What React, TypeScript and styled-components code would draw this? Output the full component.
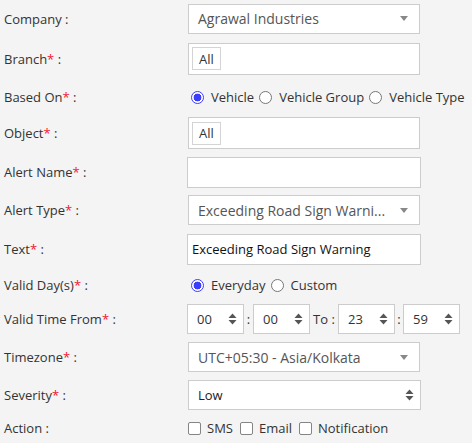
import styled, { createGlobalStyle } from 'styled-components'

const GlobalStyle = createGlobalStyle`
  html, body {
    margin: 0;
    padding: 0;
    background: #f4f4f4;
  }
  body {
    font-family: 'Open Sans', 'Liberation Sans', sans-serif;
    color: #333;
  }
`

const Form = styled.div`
  width: 472px;
  height: 443px;
  overflow: hidden;
  background: #f4f4f4;
  display: flex;
  flex-direction: column;
  padding-top: 1px;
  box-sizing: border-box;
`

const Row = styled.div<{ $h: number }>`
  flex: none;
  height: ${(p) => p.$h}px;
  display: grid;
  grid-template-columns: 187px 1fr;
  align-items: center;
`

const Label = styled.div`
  padding-left: 4px;
  font-size: 13px;
  color: #333;
  white-space: nowrap;

  .req {
    color: #f0162f;
  }
`

const Select = styled.div<{ $w?: number }>`
  box-sizing: border-box;
  width: ${(p) => p.$w ?? 232}px;
  margin-left: 1px;
  height: 30px;
  background: #fff;
  border: 1px solid #ccc;
  display: flex;
  align-items: center;
  justify-content: space-between;
  padding: 0 10px 0 9px;
  font-size: 14px;
  color: #555;
  white-space: nowrap;
`

const Caret = styled.span`
  width: 0;
  height: 0;
  border-left: 4px solid transparent;
  border-right: 4px solid transparent;
  border-top: 5px solid #888;
  margin-right: 1px;
`

const MultiBox = styled.div`
  box-sizing: border-box;
  width: 232px;
  margin-left: 1px;
  height: 32px;
  background: #fff;
  border: 1px solid #ccc;
  display: flex;
  align-items: center;
  padding-left: 3px;
`

const Chip = styled.span`
  box-sizing: border-box;
  height: 23px;
  padding: 0 6px;
  border: 1px solid #d4d4d4;
  display: flex;
  align-items: center;
  font-size: 13px;
  color: #333;
`

const TextInput = styled.div`
  box-sizing: border-box;
  width: 234px;
  height: 31px;
  background: #fff;
  border: 1px solid #ccc;
  display: flex;
  align-items: center;
  padding-left: 4px;
  font-size: 13px;
  color: #111;
`

const Choices = styled.div<{ $pad: number; $gap: number; $after: number }>`
  display: flex;
  align-items: center;
  font-size: 13px;
  color: #333;
  padding-left: ${(p) => p.$pad}px;
  white-space: nowrap;

  label {
    gap: ${(p) => p.$gap}px;
    margin-right: ${(p) => p.$after}px;
  }
`

const Choice = styled.label`
  display: flex;
  align-items: center;
`

const Radio = styled.span<{ $on?: boolean }>`
  box-sizing: border-box;
  width: 13px;
  height: 13px;
  border-radius: 50%;
  border: 1px solid ${(p) => (p.$on ? '#3d3dff' : '#767676')};
  background: ${(p) =>
    p.$on ? 'radial-gradient(circle, #3d3dff 0 3.6px, #fff 4.2px)' : '#fff'};
`

const Check = styled.span`
  box-sizing: border-box;
  width: 13px;
  height: 13px;
  border-radius: 2px;
  border: 1px solid #858585;
  background: #fff;
`

const TimeRow = styled.div`
  display: flex;
  align-items: center;
  font-size: 13px;
  color: #333;
`

const NumBox = styled.div`
  box-sizing: border-box;
  width: 57px;
  height: 30px;
  background: #fff;
  border: 1px solid #ccc;
  display: flex;
  align-items: center;
  justify-content: space-between;
  padding: 0 6px 0 9px;
  font-size: 13px;
  color: #333;
`

const Sep = styled.span<{ $w: number }>`
  width: ${(p) => p.$w}px;
  text-align: center;
`

const SeverityBox = styled(Select)`
  color: #222;
  font-size: 13px;
  padding-right: 6px;
`

function Spin() {
  return (
    <svg width="9" height="12" viewBox="0 0 9 12">
      <path d="M4.5 0.5 L8.5 5 H0.5 Z" fill="#555" />
      <path d="M4.5 11.5 L8.5 7 H0.5 Z" fill="#555" />
    </svg>
  )
}

function Req({ children }: { children: string }) {
  return (
    <Label>
      {children}
      <span className="req">*</span> :
    </Label>
  )
}

export default function App() {
  return (
    <>
      <GlobalStyle />
      <Form>
        <Row $h={35}>
          <Label>Company :</Label>
          <Select>
            Agrawal Industries
            <Caret />
          </Select>
        </Row>
        <Row $h={45}>
          <Req>Branch</Req>
          <MultiBox>
            <Chip>All</Chip>
          </MultiBox>
        </Row>
        <Row $h={32}>
          <Req>Based On</Req>
          <Choices $pad={4} $gap={7} $after={5}>
            <Choice>
              <Radio $on />
              Vehicle
            </Choice>
            <Choice>
              <Radio />
              Vehicle Group
            </Choice>
            <Choice>
              <Radio />
              Vehicle Type
            </Choice>
          </Choices>
        </Row>
        <Row $h={40}>
          <Req>Object</Req>
          <MultiBox>
            <Chip>All</Chip>
          </MultiBox>
        </Row>
        <Row $h={38}>
          <Req>Alert Name</Req>
          <TextInput />
        </Row>
        <Row $h={38}>
          <Req>Alert Type</Req>
          <Select>
            Exceeding Road Sign Warni...
            <Caret />
          </Select>
        </Row>
        <Row $h={40}>
          <Req>Text</Req>
          <TextInput>Exceeding Road Sign Warning</TextInput>
        </Row>
        <Row $h={32}>
          <Req>Valid Day(s)</Req>
          <Choices $pad={4} $gap={7} $after={5}>
            <Choice>
              <Radio $on />
              Everyday
            </Choice>
            <Choice>
              <Radio />
              Custom
            </Choice>
          </Choices>
        </Row>
        <Row $h={35}>
          <Req>Valid Time From</Req>
          <TimeRow>
            <NumBox>
              00
              <Spin />
            </NumBox>
            <Sep $w={9}>:</Sep>
            <NumBox>
              00
              <Spin />
            </NumBox>
            <Sep $w={28}>To :</Sep>
            <NumBox>
              23
              <Spin />
            </NumBox>
            <Sep $w={8}>:</Sep>
            <NumBox>
              59
              <Spin />
            </NumBox>
          </TimeRow>
        </Row>
        <Row $h={42}>
          <Req>Timezone</Req>
          <Select>
            UTC+05:30 - Asia/Kolkata
            <Caret />
          </Select>
        </Row>
        <Row $h={34}>
          <Req>Severity</Req>
          <SeverityBox $w={233}>
            Low
            <Spin />
          </SeverityBox>
        </Row>
        <Row $h={32}>
          <Label>Action :</Label>
          <Choices $pad={1} $gap={6} $after={7}>
            <Choice>
              <Check />
              SMS
            </Choice>
            <Choice>
              <Check />
              Email
            </Choice>
            <Choice>
              <Check />
              Notification
            </Choice>
          </Choices>
        </Row>
      </Form>
    </>
  )
}
